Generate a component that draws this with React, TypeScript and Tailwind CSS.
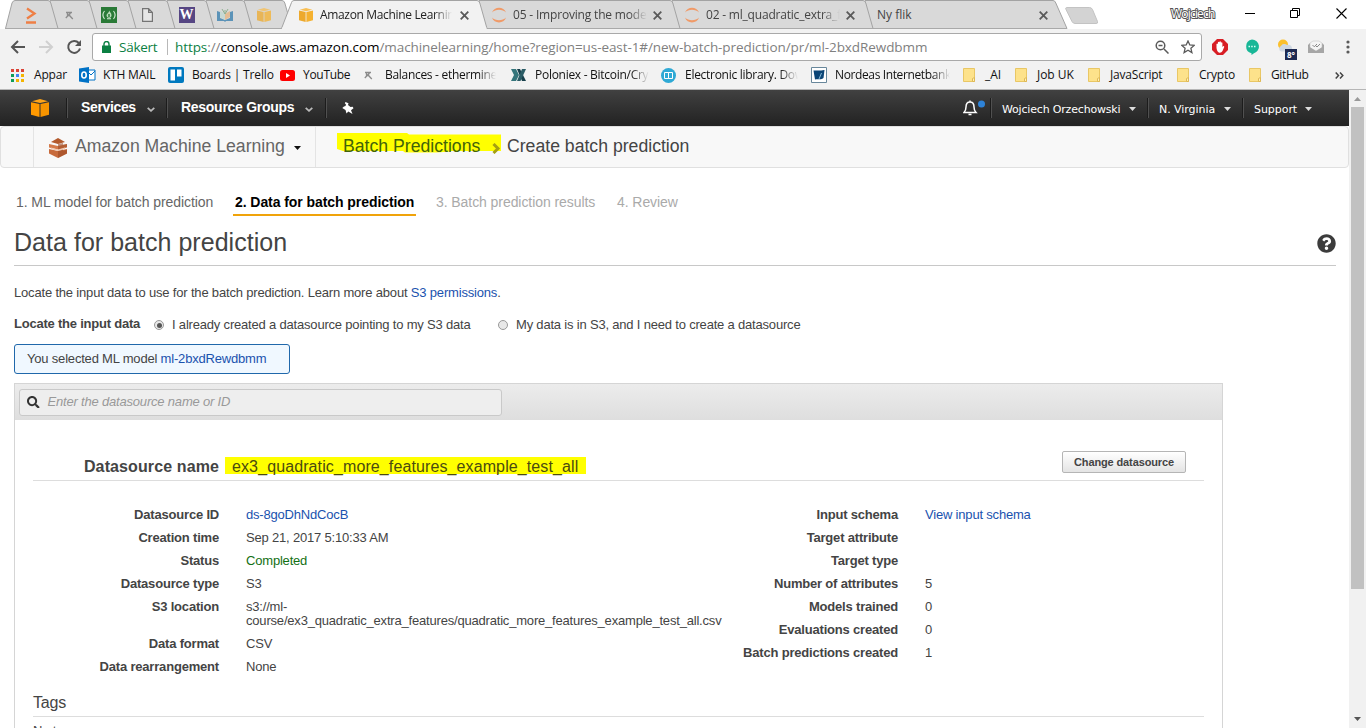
import React from "react";
import { FaQuestionCircle, FaSearch } from "react-icons/fa";
import { clsx } from "clsx";

const ui = "font-['Open_Sans','Noto_Sans',sans-serif]";

function Cube({ size, dark }: { size: number; dark?: boolean }) {
  return (
    <svg width={size} height={size} viewBox="0 0 18 18">
      <path d="M0 3.2 8.5 5v13L0 15.8z" fill={dark ? "#f90" : "#eda92c"} />
      <path d="M18 3.2 9.5 5v13l8.5-2.2z" fill={dark ? "#f79400" : "#f5b12f"} />
      <path d="M1 2.3 9 0l8 2.3L9 4.1z" fill={dark ? "#ffa418" : "#f8be52"} />
    </svg>
  );
}

function Pick() {
  return (
    <svg width="9" height="9" viewBox="0 0 9 9" fill="none" stroke="#8c8c8c" strokeWidth="1.300">
      <path d="M1 1.500h6M5.500 2 .8 7M2.500 1.500v3h3M4.500 4.500 7.800 8" />
    </svg>
  );
}

function Jupyter() {
  return (
    <svg width="16" height="16" viewBox="0 0 16 16" fill="#f09a68">
      <path d="M1 5.500C3-1 13-1 15 5.500 11.500 1.800 4.500 1.800 1 5.500z" />
      <path d="M1 10.500c2 6.500 12 6.500 14 0-3.500 3.700-10.500 3.700-14 0z" />
    </svg>
  );
}

function Close() {
  return (
    <svg width="9" height="9" viewBox="0 0 9 9" stroke="#5a5a5a" strokeWidth="1.800">
      <path d="M.7.7l7.600 7.600M8.300.7.7 8.300" />
    </svg>
  );
}

function Tab({ w, z, active, first, slant = 8, width, className, children }: {
  w: number; z: string; active?: boolean; first?: boolean; slant?: number; width: string; className?: string; children: React.ReactNode;
}) {
  const left = active ? "M-2.500 28.500L7.500 2.500Q8 .5 10 .5" : first ? "M.5 28.500L7 3Q8 .5 10 .5" : "M0 28.500L0 .5";
  return (
    <div className={clsx("relative h-[29px] shrink-0", width, z)}>
      <svg className="absolute left-0 top-0 overflow-visible" width={w} height="29">
        <path
          d={`${left}H${w - 2}Q${w} .5 ${w + 0.8} 3L${w + slant} 28.500`}
          fill={active ? "#f2f2f2" : "#d9d9d9"}
          stroke="#a3a3a3"
        />
        {!active && <path d={`M0 28.500H${w + slant}`} stroke="#a9a9a9" />}
        {active && <path d={`M-2 28.500H${w + slant - 0.5}`} stroke="#f2f2f2" strokeWidth="2" />}
      </svg>
      <div className={clsx("relative flex h-[30px] items-center", className)}>{children}</div>
    </div>
  );
}

const fade = "overflow-hidden whitespace-nowrap [mask-image:linear-gradient(to_right,black_calc(100%-18px),transparent)]";

function Folder() {
  return (
    <svg width="12" height="14" viewBox="0 0 12 14">
      <path d="M.5.5h11v13H.5z" fill="#fde28b" stroke="#e9c765" />
      <path d="M9.500 13.500v-3l2-1v4z" fill="#fff0b5" stroke="#dfb956" />
    </svg>
  );
}

function Mark({ box, icon, children, faded, track }: { box: string; icon: React.ReactNode; children: React.ReactNode; faded?: boolean; track?: string }) {
  return (
    <div className={clsx("flex h-[26px] shrink-0 items-center", box)}>
      <span className="flex w-[26px] shrink-0 items-center">{icon}</span>
      <span className={clsx("flex-1 whitespace-nowrap", track, faded && fade)}>{children}</span>
    </div>
  );
}

function Caret({ color = "#ddd" }: { color?: string }) {
  return <svg width="7" height="4" viewBox="0 0 7 4"><path d="M0 0h7L3.500 4z" fill={color} /></svg>;
}

function Chevron() {
  return <svg className="mt-[2px]" width="8" height="5" viewBox="0 0 8 5" fill="none" stroke="#bbb" strokeWidth="1.800"><path d="M.7.8 4 3.800 7.300.8" /></svg>;
}

function Sep() {
  return <span className="h-[20px] w-[2px] shrink-0 border-l border-[#1c1c1c] bg-[#505050]" />;
}

function Row({ label, children, tall, labelBox }: { label: string; children?: React.ReactNode; tall?: boolean; labelBox: string }) {
  return (
    <div className={clsx("flex leading-[14px]", tall ? "h-[37px]" : "h-[23px]")}>
      <div className={clsx("shrink-0 text-right font-bold", labelBox)}>{label}</div>
      <div className="ml-[27px] whitespace-nowrap">{children}</div>
    </div>
  );
}

function TabStrip() {
  return (
    <div className="flex h-[29px] bg-white pl-[5px]">
      <Tab w={45} z="z-[20]" width="w-[45px]" first className="justify-center pl-[8px]">
        <svg width="11" height="17" viewBox="0 0 11 17" fill="none" stroke="#ee7f45" strokeWidth="2.300"><path d="M1 1.500 8.500 6.500 1 11.500M0 15.500h10" /></svg>
      </Tab>
      <Tab w={39} z="z-[19]" width="w-[39px]" className="justify-center"><Pick /></Tab>
      <Tab w={39} z="z-[18]" width="w-[39px]" className="justify-center">
        <svg width="16" height="16" viewBox="0 0 16 16"><path d="M0 0h16v16H0z" fill="#2a7a37" /><path d="M3.500 4c-2 2.500-2 5.500 0 8M12.500 4c2 2.500 2 5.500 0 8M6 11.800h4" fill="none" stroke="#d6ecd6" strokeWidth="1.100" /><path d="M8.300 3.500c.5 2 2.200 2.500 2.200 4.800 0 2-1.300 2.500-2.500 2.500s-2.500-.8-2.500-2.500C5.500 6.500 8 6 8.300 3.500z" fill="#b9dcb9" /><path d="M8 7v3" stroke="#2a7a37" strokeWidth="1.500" /></svg>
      </Tab>
      <Tab w={39} z="z-[17]" width="w-[39px]" className="justify-center">
        <svg width="11" height="14" viewBox="0 0 11 14" fill="#e6e6e6" stroke="#747474" strokeWidth="1.200"><path d="M.6.6h6l3.800 3.800v9H.6zM6.600.6v3.800h3.800" /></svg>
      </Tab>
      <Tab w={39} z="z-[16]" width="w-[39px]" className="justify-center">
        <span className="flex h-[16px] w-[16px] items-center justify-center bg-[#564683] font-['Liberation_Serif',serif] text-[14px] font-bold leading-none text-white">W</span>
      </Tab>
      <Tab w={38} z="z-[15]" width="w-[38px]" className="justify-center">
        <svg width="16" height="13" viewBox="0 0 16 13"><path d="M0 2l3 1v6l5 2 5-2V3l3-1v10H9l-1 1-1-1H0z" fill="#5c93b8" /><path d="M3 2l5 3v6L3 8z" fill="#c7d9d4" /><path d="M13 2 8 5v6l5-3z" fill="#e4bd96" /><path d="M5 0l3 5 3-5M8 1v4" fill="none" stroke="#8fb090" /></svg>
      </Tab>
      <Tab w={40} z="z-[14]" width="w-[40px]" className="justify-center">
        <span className="opacity-75"><Cube size={14} /></span>
      </Tab>
      <Tab w={195} z="z-[30]" width="w-[195px]" active className="pl-[15px]">
        <Cube size={14} />
        <span className={clsx("ml-[7px] w-[132px] tracking-[-0.340px] text-[#222]", fade)}>Amazon Machine Learnin</span>
        <span className="ml-[8px]"><Close /></span>
      </Tab>
      <Tab w={193} z="z-[13]" width="w-[193px]" className="pl-[12px]">
        <Jupyter />
        <span className={clsx("ml-[6px] w-[134px] tracking-[-0.180px] text-[#444]", fade)}>05 - Improving the mode</span>
        <span className="ml-[6px]"><Close /></span>
      </Tab>
      <Tab w={193} z="z-[12]" width="w-[193px]" className="pl-[12px]">
        <Jupyter />
        <span className={clsx("ml-[6px] w-[134px] tracking-[-0.200px] text-[#444]", fade)}>02 - ml_quadratic_extra_f</span>
        <span className="ml-[6px]"><Close /></span>
      </Tab>
      <Tab w={190} z="z-[11]" width="w-[190px]" slant={12} className="pl-[12px]">
        <span className="w-[162px] text-[#444]">Ny flik</span>
        <Close />
      </Tab>
      <svg className="ml-[9px] mt-[6px]" width="36" height="19" viewBox="0 0 36 19"><path d="M2.500 1.500h23q2 0 3 2l5 12q.8 2-1.500 2h-21q-2 0-3-2l-6-12q-.8-2 .5-2z" fill="#d3d3d3" stroke="#c3c3c3" /></svg>
      <span className="ml-[71px] mt-[6px] h-[16px] w-[46px] whitespace-nowrap text-[12px] leading-[16px] tracking-[-0.800px] text-white [-webkit-text-stroke:2px_#555] [paint-order:stroke_fill]">Wojciech</span>
      <svg className="ml-[27px] mt-[8px]" width="12" height="12"><path d="M1 5.500h10" stroke="#000" /></svg>
      <svg className="ml-[34px] mt-[8px]" width="11" height="11" fill="none" stroke="#000"><path d="M.5 2.500h7v7h-7zM2.500 2.500V.5h7v7h-2" /></svg>
      <svg className="ml-[35px] mt-[8px]" width="11" height="11" stroke="#000" strokeWidth="1.100"><path d="M.5.500l10 10M10.500.5l-10 10" /></svg>
    </div>
  );
}

function Toolbar() {
  return (
    <div className="flex h-[33px] items-center bg-[#f2f2f2] pl-[10px] pt-[3px]">
      <svg width="16" height="14" viewBox="0 0 16 14" fill="none" stroke="#555" strokeWidth="2"><path d="M15 7H2M8 1 2 7l6 6" /></svg>
      <svg className="ml-[12px]" width="16" height="14" viewBox="0 0 16 14" fill="none" stroke="#d0d0d0" strokeWidth="2"><path d="M1 7h13M8 1l6 6-6 6" /></svg>
      <svg className="ml-[12px]" width="16" height="16" viewBox="0 0 16 16"><path d="M12.800 4A6 6 0 1 0 14 9.500" fill="none" stroke="#555" strokeWidth="2" /><path d="M15 1v6H9z" fill="#555" /></svg>
      <div className="ml-[10px] flex h-[28px] w-[1110px] shrink-0 items-center rounded-[3px] border border-[#a9a9a9] bg-white pl-[9px] text-[13.500px]">
        <svg width="9" height="12" viewBox="0 0 9 12"><path d="M0 4.500h9V12H0z" fill="#0b8043" /><path d="M2 5V3a2.500 2.500 0 0 1 5 0v2" fill="none" stroke="#0b8043" strokeWidth="1.400" /></svg>
        <span className="ml-[8px] w-[48px] whitespace-nowrap tracking-[-0.250px] text-[#0b8043]">Säkert</span>
        <span className="h-[16px] w-px bg-[#b8b8b8]" />
        <span className="ml-[7px] w-[980px] whitespace-nowrap tracking-[-0.080px] text-[#808080]">
          <span className="text-[#0b8043]">https</span>://<span className="text-black">console.aws.amazon.com</span>/machinelearning/home?region=us-east-1#/new-batch-prediction/pr/ml-2bxdRewdbmm
        </span>
        <svg width="14" height="14" viewBox="0 0 14 14" fill="none" stroke="#5a5a5a" strokeWidth="1.500"><circle cx="5.500" cy="5.500" r="4.300" /><path d="M9 9l4.500 4.500M3.500 5.500h4" /></svg>
        <svg className="ml-[12px]" width="14" height="14" viewBox="0 0 14 14" fill="none" stroke="#5a5a5a" strokeWidth="1.300"><path d="M7 1l1.800 4 4.400.4-3.300 2.900 1 4.300L7 10.300l-3.900 2.300 1-4.300L.8 5.400 5.200 5z" /></svg>
      </div>
      <svg className="ml-[10px]" width="16" height="16" viewBox="0 0 16 16"><path d="M5 0h6l5 5v6l-5 5H5l-5-5V5z" fill="#d81e25" /><path d="M4.500 9V5q.7-1 1.400 0V3.300q.8-1 1.500 0v-.5q.8-1 1.500 0v1q.8-1 1.500 0V8l1-1q1 0 .8 1L10.500 12q-1 2-3 1.800Q5 13 4.500 9z" fill="#fff" /></svg>
      <svg className="ml-[16px]" width="16" height="16" viewBox="0 0 16 16"><path d="M8 .5a7 7 0 0 1 2 13.700L7.500 16v-1.800A7 7 0 0 1 8 .5z" fill="#18b797" /><path d="M4.500 7.500h1.500M7.200 7.500h1.500M10 7.500h1.500" stroke="#d5fff5" strokeWidth="1.500" /></svg>
      <svg className="ml-[15px] mt-[6px]" width="23" height="22" viewBox="0 0 23 22"><circle cx="8" cy="5.500" r="5" fill="#fbc02d" /><path d="M6 12.500a3 3 0 0 1 0-5.500 4 4 0 0 1 6-1 3.500 3.500 0 0 1 5 3v3.500z" fill="#cfd8e3" /><path d="M10 10h12v11H10z" fill="#1d2951" /><text x="12" y="19" fill="#fff" fontSize="8" fontWeight="700">8°</text></svg>
      <svg className="ml-[10px]" width="16" height="14" viewBox="0 0 16 14"><path d="M0 5l2-2v8h12V3l2 2v8H0z" fill="#a2a2a2" /><path d="M2 3l3-2h6l3 2v5l-6 3-6-3z" fill="#f4f4f4" stroke="#c4c4c4" strokeWidth=".6" /><path d="M0 6l8 5 8-5v7H0z" fill="#a6a6a6" /><path d="M4.500 5l1.800 1.800L9 4M8 6l1 1 3-3" fill="none" stroke="#888" /></svg>
      <svg className="ml-[22px]" width="4" height="14" viewBox="0 0 4 14" fill="#5a5a5a"><circle cx="2" cy="2" r="1.600" /><circle cx="2" cy="7" r="1.600" /><circle cx="2" cy="12" r="1.600" /></svg>
    </div>
  );
}

const dots = ["#db4437", "#db4437", "#db4437", "#0f9d58", "#4285f4", "#f4b400", "#0f9d58", "#f4b400", "#f4b400"];

function Bookmarks() {
  return (
    <div className="flex h-[28px] border-b border-[#b6b6b6] bg-[#f2f2f2] pl-[11px] text-[#111]">
      <Mark box="w-[68px]" track="-ml-[3px] tracking-[-0.200px]" icon={<svg width="13" height="13">{dots.map((c, i) => <rect key={i} x={(i % 3) * 5} y={Math.floor(i / 3) * 5} width="3" height="3" fill={c} />)}</svg>}>Appar</Mark>
      <Mark box="w-[89px]" track="-ml-[2px] tracking-[-0.200px]" icon={<svg width="17" height="16" viewBox="0 0 17 16"><path d="M8 3h8v10H8z" fill="#fff" stroke="#0072c6" /><path d="M8 4l4 4 4-4" fill="none" stroke="#0072c6" /><path d="M0 1.500 10 0v16L0 14.500z" fill="#0072c6" /><ellipse cx="5" cy="8" rx="2.200" ry="3" fill="none" stroke="#fff" strokeWidth="1.600" /></svg>}>KTH MAIL</Mark>
      <Mark box="w-[112px]" track="-ml-[2px] tracking-[-0.150px]" icon={<svg width="16" height="16"><rect width="16" height="16" rx="2" fill="#0079bf" /><rect x="2.500" y="2.500" width="4.500" height="11" fill="#fff" /><rect x="9" y="2.500" width="4.500" height="7" fill="#fff" /></svg>}>Boards | Trello</Mark>
      <Mark box="w-[84px]" track="-ml-[3px] tracking-[-0.300px]" icon={<svg width="15" height="11"><rect width="15" height="11" rx="2.500" fill="#f00" /><path d="M6 3l4 2.500L6 8z" fill="#fff" /></svg>}>YouTube</Mark>
      <Mark box="w-[132px]" track="-ml-[5px] tracking-[-0.300px]" faded icon={<Pick />}>Balances - ethermine</Mark>
      <Mark box="ml-[15px] w-[138px]" track="-ml-[2px] tracking-[-0.280px]" faded icon={<svg width="15" height="12" viewBox="0 0 15 12"><path d="M0 0h5l3 6-3 6H0l3-6z" fill="#35757b" /><path d="M6 0h3l6 12h-4z" fill="#173f4b" /><path d="M11 0h4L9.500 12H6z" fill="#2a5c66" /></svg>}>Poloniex - Bitcoin/Cry</Mark>
      <Mark box="ml-[12px] w-[137px]" track="-ml-[2px] tracking-[-0.280px]" faded icon={<svg width="15" height="15"><circle cx="7.500" cy="7.500" r="7.500" fill="#2ea9d5" /><path d="M3.500 4.500h4v6h-4zM7.500 4.500h4v6h-4z" fill="none" stroke="#fff" /></svg>}>Electronic library. Dow</Mark>
      <Mark box="ml-[13px] w-[139px]" track="-ml-[2px] tracking-[-0.380px]" faded icon={<svg width="16" height="16"><path d="M.5.5h15v15H.5z" fill="#fff" stroke="#68879b" /><path d="M2.500 3.500h6c2 0 5-.5 5-.5L12.500 11c-2 2-6 1-8.500 1.500z" fill="#0b4576" /><path d="M8 12 10.500 6" stroke="#84bad9" /></svg>}>Nordeas Internetbank</Mark>
      <Mark box="ml-[13px] w-[52px]" track="-ml-[4px]" icon={<Folder />}>_AI</Mark>
      <Mark box="w-[73px]" track="-ml-[4px] tracking-[-0.050px]" icon={<Folder />}>Job UK</Mark>
      <Mark box="w-[89px]" track="-ml-[4px] tracking-[-0.200px]" icon={<Folder />}>JavaScript</Mark>
      <Mark box="w-[72px]" track="-ml-[4px] tracking-[-0.200px]" icon={<Folder />}>Crypto</Mark>
      <Mark box="w-[86px]" track="-ml-[4px] tracking-[-0.350px]" icon={<Folder />}>GitHub</Mark>
      <svg className="mt-[10px]" width="9" height="7" viewBox="0 0 9 7" fill="none" stroke="#444" strokeWidth="1.500"><path d="M.7.500 3.500 3.500.7 6.500M5 .5l2.800 3L5 6.500" /></svg>
    </div>
  );
}

function ConsoleHeader() {
  return (
    <div className="flex h-[36px] shrink-0 items-center bg-linear-to-b from-[#414141] to-[#222] pl-[31px] text-white">
      <Cube size={18} dark />
      <span className="ml-[17px] flex"><Sep /></span>
      <span className="ml-[13px] w-[66px] whitespace-nowrap pb-[2px] text-[14px] font-bold tracking-[-0.350px]">Services</span>
      <Chevron />
      <span className="ml-[11px] flex"><Sep /></span>
      <span className="ml-[13px] w-[124px] whitespace-nowrap pb-[2px] text-[14px] font-bold tracking-[-0.280px]">Resource Groups</span>
      <Chevron />
      <span className="ml-[12px] flex"><Sep /></span>
      <svg className="ml-[15px]" width="12" height="12" viewBox="0 0 12 12" fill="#fff"><path d="M3.500 0 6.500 1.200 6 3l2.500 2 2.200-.2.800 1.500-2.500 2L10.500 12 6.300 9.500 4.500 11.500 3.500 8 .3 6 2 4.500l1.500-.5.500-1.500L2.800 1.300z" /></svg>
      <div className={clsx("ml-auto flex items-center pt-[2px] text-[11px]", "font-['DejaVu_Sans',Verdana,sans-serif]")}>
        <svg className="-mt-[1px]" width="23" height="17" viewBox="0 0 23 17"><path d="M1 12.500h12c-2-2-2-3-2-5.500 0-3-1.500-5-4-5S3 4 3 7c0 2.500 0 3.500-2 5.500zM7 2V.5M5.500 14.500h3" fill="none" stroke="#fff" strokeWidth="1.500" /><circle cx="18.500" cy="4" r="3.500" fill="#2e83d8" /></svg>
        <span className="-mt-[2px] ml-[4px] flex"><Sep /></span>
        <span className="ml-[10px] w-[127px] whitespace-nowrap pt-[2px] tracking-[-0.180px]">Wojciech Orzechowski</span><Caret />
        <span className="-mt-[2px] ml-[11px] flex"><Sep /></span>
        <span className="ml-[10px] w-[65px] whitespace-nowrap pt-[2px] tracking-[-0.050px]">N. Virginia</span><Caret />
        <span className="-mt-[2px] ml-[11px] flex"><Sep /></span>
        <span className="ml-[10px] w-[51px] whitespace-nowrap pt-[2px] tracking-[-0.050px]">Support</span><Caret />
        <span className="w-[37px]" />
      </div>
    </div>
  );
}

function ServiceBar() {
  return (
    <div className="flex h-[42px] shrink-0 items-center rounded-[4px] border border-[#e0e0e0] bg-[#f8f8f8] text-[17.650px] tracking-normal text-[#444]">
      <div className="ml-[32px] flex h-full w-[283px] items-center border-x border-[#e4e4e4] pl-[14px]">
        <svg className="mt-[2px]" width="20" height="20" viewBox="0 0 20 20">
          <path d="M3 4l7-4 7 4-7 2z" fill="#b35a2c" /><path d="M1 6l9 2 9-2v3.500l-9 2-9-2z" fill="#d47a4a" /><path d="M1 11l9 2 9-2v4.500L10 20l-9-4.500z" fill="#c76a3b" /><path d="M10 6v14l9-4.500V12l-4 .8V10l4-1V6l-4 .8V5z" fill="#9d4b26" opacity=".6" /><path d="M3 9.500l7 2 7-2v1.500l-7 2-7-2z" fill="#f2cab2" />
        </svg>
        <span className="ml-[7px] w-[219px] whitespace-nowrap pb-[2px] text-[#666]">Amazon Machine Learning</span>
        <span className="mt-[2px]"><Caret color="#111" /></span>
      </div>
      <div className="relative ml-[21px] flex h-[20px] w-[164px] items-center pl-[6px]">
        <svg className="absolute left-0 -top-[4px]" width="164" height="20"><path d="M0 0h70l2 1.500h92V18h-50v.5l-15 1H68l-2-1.500H6L0 16z" fill="#ff0" /></svg>
        <span className="relative w-[150px] whitespace-nowrap pb-[2px] text-[#41630a]">Batch Predictions</span>
        <svg className="relative mt-[3px] shrink-0" width="9" height="11" viewBox="0 0 9 11" fill="none" stroke="#a5a012" strokeWidth="3"><path d="M1.500 1 6 5.500 1.500 10" /></svg>
      </div>
      <span className="ml-[6px] whitespace-nowrap pb-[2px]">Create batch prediction</span>
    </div>
  );
}

function Details() {
  return (
    <div className="mt-[9px] flex h-[360px] w-[1209px] shrink-0 flex-col border border-[#d5d5d5] bg-white">
      <div className="flex h-[36px] shrink-0 items-center bg-linear-to-b from-[#ececec] to-[#dedede] pl-[4px]">
        <div className="flex h-[27px] w-[483px] items-center rounded-[3px] border border-[#c9c9c9] bg-[#eee] pl-[7px] italic text-[#999]">
          <FaSearch className="mr-[8px] text-[12.500px] text-[#333]" />
          <span>Enter the datasource name or ID</span>
        </div>
      </div>
      <div className="ml-[18px] mr-[18px] mt-[29px] flex h-[32px] shrink-0 border-b border-[#ddd] text-[16px] leading-[35px] tracking-normal">
        <b className="w-[186px] whitespace-nowrap text-right tracking-[0.110px]">Datasource name</b>
        <span className="ml-[6px] mt-[8px] h-[17px] w-[361px] whitespace-nowrap bg-[#ff0] pl-[7px] leading-[19px] tracking-[0.110px] text-[#4b4b10]">ex3_quadratic_more_features_example_test_all</span>
        <button className="ml-auto mr-[18px] mt-[2px] h-[22px] w-[124px] rounded-[2px] border border-[#b5b5b5] bg-linear-to-b from-white to-[#e4e4e4] text-[11px] font-bold leading-[20px] tracking-[-0.120px]">Change datasource</button>
      </div>
      <div className="mt-[27px] flex h-[176px] shrink-0 pl-[18px]">
        <div className="w-[700px]">
          <Row labelBox="w-[186px]" label="Datasource ID"><span className="text-[#1a52ae]">ds-8goDhNdCocB</span></Row>
          <Row labelBox="w-[186px]" label="Creation time">Sep 21, 2017 5:10:33 AM</Row>
          <Row labelBox="w-[186px]" label="Status"><span className="text-[#137013]">Completed</span></Row>
          <Row labelBox="w-[186px]" label="Datasource type">S3</Row>
          <Row labelBox="w-[186px]" label="S3 location" tall>s3://ml-<br />course/ex3_quadratic_extra_features/quadratic_more_features_example_test_all.csv</Row>
          <Row labelBox="w-[186px]" label="Data format">CSV</Row>
          <Row labelBox="w-[186px]" label="Data rearrangement">None</Row>
        </div>
        <div>
          <Row labelBox="w-[165px]" label="Input schema"><span className="text-[#1a52ae]">View input schema</span></Row>
          <Row labelBox="w-[165px]" label="Target attribute" />
          <Row labelBox="w-[165px]" label="Target type" />
          <Row labelBox="w-[165px]" label="Number of attributes">5</Row>
          <Row labelBox="w-[165px]" label="Models trained">0</Row>
          <Row labelBox="w-[165px]" label="Evaluations created">0</Row>
          <Row labelBox="w-[165px]" label="Batch predictions created">1</Row>
        </div>
      </div>
      <div className="mx-[18px] mt-[8px] h-[25px] shrink-0 border-b border-[#ddd] text-[16px] leading-[22px]">Tags</div>
      <div className="ml-[18px] mt-[7px] leading-[14px]">No tags</div>
    </div>
  );
}

function Radio({ on }: { on?: boolean }) {
  return (
    <span className="flex h-[10px] w-[10px] shrink-0 items-center justify-center rounded-full border border-[#999] bg-[#e8e8e8]">
      {on && <span className="h-[5px] w-[5px] rounded-full bg-[#555]" />}
    </span>
  );
}

function Content() {
  return (
    <div className="flex flex-col pl-[14px]">
      <div className="mt-[25px] flex h-[23px] whitespace-nowrap text-[14px] leading-[19px] tracking-[-0.070px] text-[#aaa]">
        <span className="ml-[2px] w-[217px] text-[#666]">1. ML model for batch prediction</span>
        <span className="w-[183px] border-b-2 border-[#f0a30a] pl-[2px] font-bold text-black">2. Data for batch prediction</span>
        <span className="ml-[20px] w-[181px]">3. Batch prediction results</span>
        <span>4. Review</span>
      </div>
      <div className="flex h-[50px] w-[1322px] items-center justify-between border-b border-[#c8c8c8]">
        <h1 className="pt-[3px] text-[25px] leading-[30px] tracking-[0.030px]">Data for batch prediction</h1>
        <FaQuestionCircle className="mt-[5px] text-[19px] text-[#3c3c3c]" />
      </div>
      <p className="mt-[19px] leading-[15px] tracking-[-0.180px]">Locate the input data to use for the batch prediction. Learn more about <span className="text-[#1a52ae]">S3 permissions</span>.</p>
      <div className="mt-[17px] flex h-[16px] items-center">
        <b className="w-[140px] whitespace-nowrap pb-[2px] tracking-[-0.220px]">Locate the input data</b>
        <Radio on />
        <span className="ml-[8px] w-[326px] whitespace-nowrap">I already created a datasource pointing to my S3 data</span>
        <Radio />
        <span className="ml-[8px]">My data is in S3, and I need to create a datasource</span>
      </div>
      <div className="mt-[11px] h-[30px] w-[276px] whitespace-nowrap rounded-[3px] border border-[#2068ab] bg-[#f0f8ff] pl-[12px] leading-[27px]">
        You selected ML model <span className="text-[#1a52ae]">ml-2bxdRewdbmm</span>
      </div>
      <Details />
    </div>
  );
}

export default function App() {
  return (
    <div className="flex h-[728px] w-[1366px] flex-col overflow-hidden bg-white">
      <div className={clsx("text-[12px]", ui)}>
        <TabStrip />
        <Toolbar />
        <Bookmarks />
      </div>
      <div className="flex min-h-0 flex-1">
        <main className="flex w-[1349px] flex-col overflow-hidden font-['Liberation_Sans',Arial,sans-serif] text-[13px] tracking-[-0.190px] text-[#444]">
          <ConsoleHeader />
          <ServiceBar />
          <Content />
        </main>
        <div className="flex w-[17px] flex-col items-center bg-[#f1f1f1]">
          <svg className="my-[6px] shrink-0" width="7" height="5"><path d="M0 5h7L3.500 1z" fill="#999" /></svg>
          <div className="h-[482px] w-[13px] shrink-0 bg-[#c1c1c1]" />
          <svg className="mb-[6px] mt-auto shrink-0" width="7" height="5"><path d="M0 0h7L3.500 4z" fill="#555" /></svg>
        </div>
      </div>
    </div>
  );
}
